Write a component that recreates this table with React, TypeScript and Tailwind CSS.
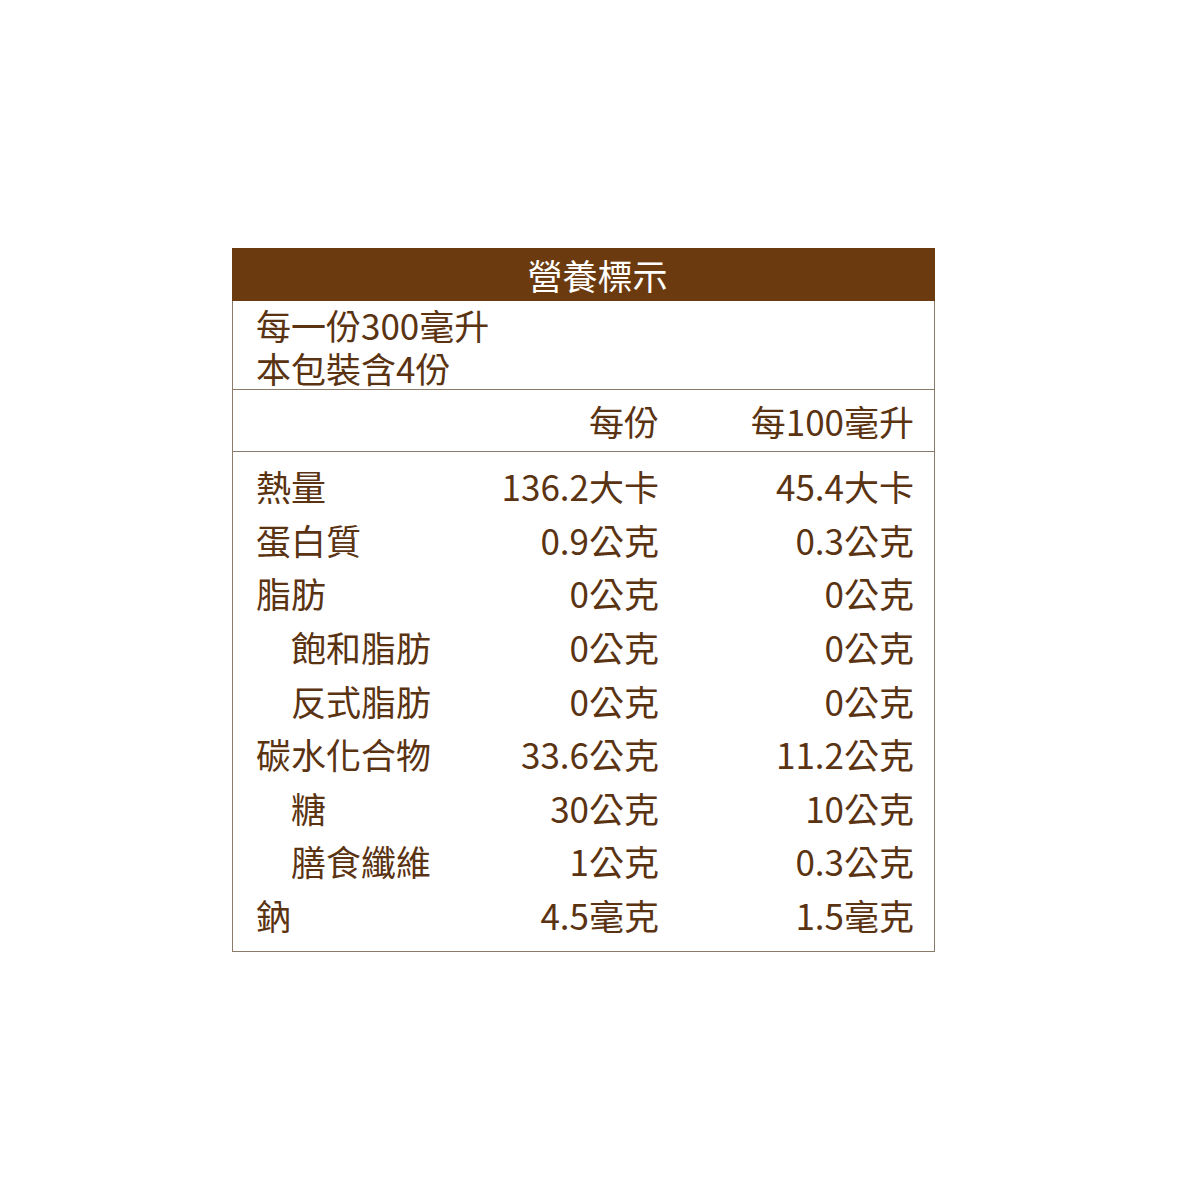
import React from "react";

const rows: { label: string; a: string; b: string; indent?: boolean }[] = [
  { label: "熱量", a: "136.2大卡", b: "45.4大卡" },
  { label: "蛋白質", a: "0.9公克", b: "0.3公克" },
  { label: "脂肪", a: "0公克", b: "0公克" },
  { label: "飽和脂肪", a: "0公克", b: "0公克", indent: true },
  { label: "反式脂肪", a: "0公克", b: "0公克", indent: true },
  { label: "碳水化合物", a: "33.6公克", b: "11.2公克" },
  { label: "糖", a: "30公克", b: "10公克", indent: true },
  { label: "膳食纖維", a: "1公克", b: "0.3公克", indent: true },
  { label: "鈉", a: "4.5毫克", b: "1.5毫克" },
];

export default function App() {
  return (
    <div
      className="w-[1200px] h-[1200px] bg-white pt-[248px] pl-[232px]"
      style={{ fontFamily: '"Noto Sans CJK TC", "Noto Sans", sans-serif' }}
    >
      <div className="w-[703px] border-x border-b border-[#8a7a69] text-[#5a3312] text-[35px] leading-none">
        <div className="h-[53px] bg-[#6b3b0f] text-white flex items-center justify-center -mx-px">
          <span className="ml-[28px]">營養標示</span>
        </div>
        <div className="h-[89px] border-b border-[#8a7a69] pl-[23px] pt-[2px]">
          <div className="h-[43px] flex items-center">每一份300毫升</div>
          <div className="h-[43px] flex items-center">本包裝含4份</div>
        </div>
        <div className="h-[62px] border-b border-[#8a7a69] grid grid-cols-[1fr_200px_255px] items-center pl-[23px] pr-[20px]">
          <div></div>
          <div className="text-right">每份</div>
          <div className="text-right">每100毫升</div>
        </div>
        <div className="pt-[7px] pb-[10px]">
          {rows.map((r) => (
            <div
              key={r.label}
              className="h-[53.6px] grid grid-cols-[1fr_200px_255px] items-center pl-[23px] pr-[20px]"
            >
              <div className={r.indent ? "pl-[35px]" : ""}>{r.label}</div>
              <div className="text-right">{r.a}</div>
              <div className="text-right">{r.b}</div>
            </div>
          ))}
        </div>
      </div>
    </div>
  );
}
